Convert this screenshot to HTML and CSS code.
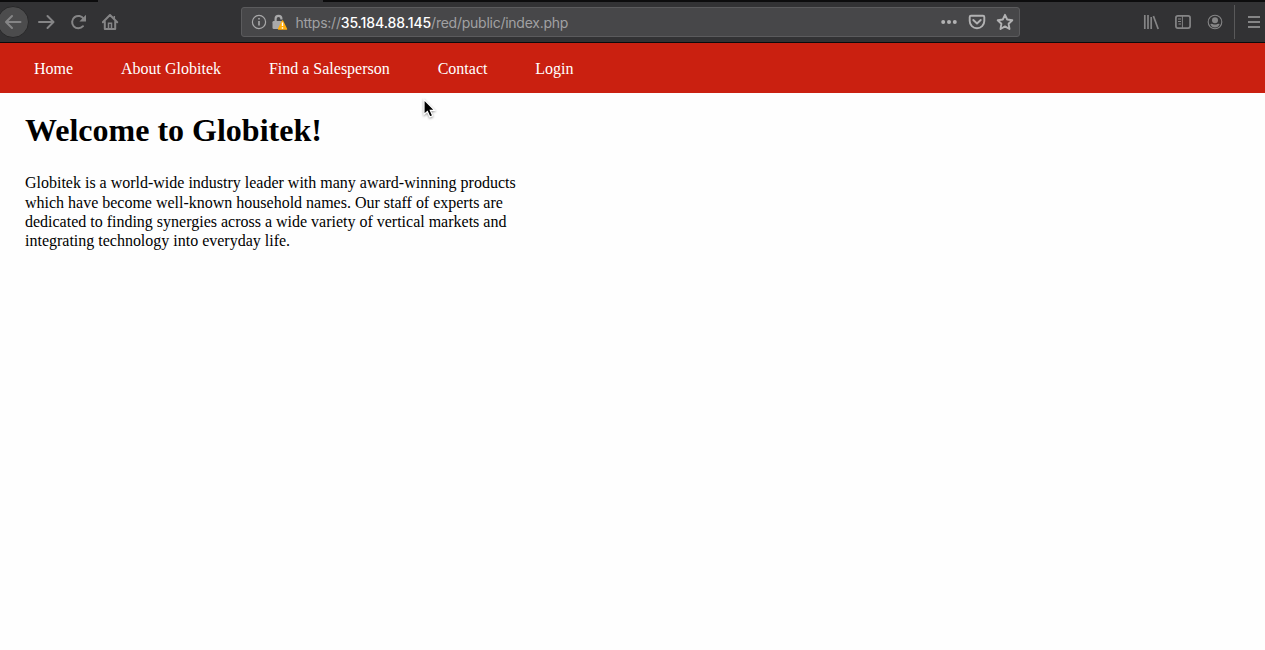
FILE: index.html
```html
<!DOCTYPE html>
<html lang="en">
<head>
<meta charset="utf-8">
<title>Globitek</title>
<link rel="stylesheet" href="styles.css">
</head>
<body>
<div class="tabs"><span class="active-tab"></span></div>
<header class="toolbar">
  <div class="navigation">
    <span class="back"><svg width="30" height="32" viewBox="0 0 30 32"><circle cx="13" cy="16" r="15.5" fill="#4c4c4d" stroke="#282829"/><path d="M20.5 16H6.5M12 10l-6 6 6 6" class="stroke"/></svg></span>
    <svg width="18" height="16" viewBox="0 0 18 16"><path d="M1 8h14M9.5 2l6 6-6 6" class="stroke"/></svg>
    <svg width="18" height="16" viewBox="0 0 18 16"><path d="M13 12.2A6.2 6.2 0 1 1 13.7 5" class="stroke"/><path d="M16 .8V7.4H9.4z" fill="#858586"/></svg>
    <svg width="18" height="16" viewBox="0 0 18 16"><path d="M.8 8.2 8 1l7.2 7.2M2.8 7.8V15h10.4V7.8" class="stroke"/><path d="M6.5 15V9.2h3V15M12.3 5V2" fill="none" stroke="#858586" stroke-width="1.5"/></svg>
  </div>
  <div class="address">
    <svg class="info" width="16" height="16" viewBox="0 0 16 16"><circle cx="8" cy="8" r="6.6" fill="none" stroke="#a9a9aa" stroke-width="1.2"/><path d="M8 7v4.5M8 4v1.6" stroke="#a9a9aa" stroke-width="1.6"/></svg>
    <svg class="lock" width="17" height="17" viewBox="0 0 17 17"><path d="M3.6 8.5V4.8a2.9 2.9 0 0 1 5.8 0V5.6" fill="none" stroke="#a9a9aa" stroke-width="2.2"/><rect x=".5" y="7" width="10" height="8" rx="1.3" fill="#a9a9aa"/><path d="M10.5 7 14.4 15H6.6z" fill="#ffad0d" stroke="#ffad0d" stroke-width="1.6" stroke-linejoin="round"/><path d="M10.5 8.5v3.6M10.5 13.3v1.4" stroke="#fff" stroke-width="1.4"/></svg>
    <span class="url">https://<span class="host">35.184.88.145</span>/red/public/index.php</span>
    <div class="actions">
      <svg width="18" height="18" viewBox="0 0 18 18" fill="#b2b2b3"><circle cx="3.2" cy="9" r="2"/><circle cx="9" cy="9" r="2"/><circle cx="14.8" cy="9" r="2"/></svg>
      <svg width="18" height="18" viewBox="0 0 18 18"><path d="M3 2.8h12q1.3 0 1.3 1.3V8A7.3 7.3 0 0 1 1.7 8V4.1q0-1.3 1.3-1.3z" class="bright"/><path d="m5.3 7 3.7 3.5L12.7 7" class="bright"/></svg>
      <svg width="18" height="18" viewBox="0 0 18 18"><path d="m9 1.8 2.2 4.7 5.1.7-3.7 3.6.9 5.2L9 13.4 4.5 16l.9-5.2-3.7-3.6 5.1-.7z" class="bright"/></svg>
    </div>
  </div>
  <div class="tools">
    <svg width="16" height="16" viewBox="0 0 16 16"><path d="M1.8 1v14M5 1v14M8.2 3v12M10.4 2 15.2 15" fill="none" stroke="#858586" stroke-width="1.7"/></svg>
    <svg width="16" height="16" viewBox="0 0 16 16"><rect x=".9" y="1.9" width="14.2" height="12.2" rx="2" fill="none" stroke="#858586" stroke-width="1.7"/><path d="M7.4 2v12" stroke="#858586"/><path d="M3 5h3M3 7.5h3M3.5 10H6" stroke="#858586" stroke-width="1.1"/></svg>
    <svg width="16" height="16" viewBox="0 0 16 16"><circle cx="8" cy="8" r="6.8" fill="none" stroke="#858586" stroke-width="1.1"/><circle cx="8" cy="6.2" r="3" fill="#858586"/><path d="M3.3 10q1.2-.6 2.4 0 2.3 1.2 4.6 0 1.2-.6 2.4 0-1.3 3.6-4.7 3.6T3.3 10z" fill="#858586"/></svg>
  </div>
  <div class="menu"><svg width="16" height="16" viewBox="0 0 16 16"><path d="M1 3h12M1 8h12M1 13h12" stroke="#858586" stroke-width="1.8"/></svg></div>
</header>
<nav class="site-nav">
  <a>Home</a><a>About Globitek</a><a>Find a Salesperson</a><a>Contact</a><a>Login</a>
</nav>
<main class="content">
  <h1 class="title">Welcome to Globitek!</h1>
  <p class="intro">Globitek is a world-wide industry leader with many award-winning products<br>which have become well-known household names. Our staff of experts are<br>dedicated to finding synergies across a wide variety of vertical markets and<br>integrating technology into everyday life.</p>
</main>
<svg class="cursor" width="16" height="22" viewBox="0 0 16 22"><path d="M2 1.5v15l3.4-3 2.5 5.4 2.8-1.2-2.4-5.3h4.4z" fill="#000" stroke="#fff" stroke-width="1.2"/></svg>
</body>
</html>
```
FILE: styles.css
```css
* { box-sizing: border-box; }
body { margin: 0; height: 650px; overflow: hidden; background: #fefefe; font-family: "Liberation Serif", serif; }
svg { display: block; flex: none; }
.tabs { height: 2px; background: #0c0c0d; display: flex; }
.active-tab { margin-left: 98px; width: 225px; height: 2px; background: #323234; }
.toolbar { height: 41px; background: #323234; border-bottom: 1px solid #0a0a0b; display: flex; align-items: center; }
.navigation { width: 241px; display: flex; align-items: center; gap: 14px; }
.back { width: 24px; display: flex; }
.stroke { fill: none; stroke: #858586; stroke-width: 2; stroke-linecap: round; stroke-linejoin: round; }
.bright { fill: none; stroke: #b2b2b3; stroke-width: 1.9; stroke-linecap: round; stroke-linejoin: round; }
.address { width: 779px; height: 30px; border: 1px solid #5b5b5d; border-radius: 3px; background: #474749; display: flex; align-items: center; padding: 0 5.5px 0 8.5px; }
.lock { margin-left: 5.5px; }
.url { margin: 2px 0 0 6.5px; font: 14px/18px Inter, sans-serif; letter-spacing: -0.25px; color: #a1a1a3; white-space: nowrap; }
.host { color: #fff; font-weight: 500; letter-spacing: -0.07px; }
.actions { margin-left: auto; display: flex; gap: 10px; }
.tools { margin-left: 123px; display: flex; gap: 16px; }
.menu { margin-left: 11px; height: 34px; border-left: 1px solid #59595a; padding: 9px 0 0 12px; }
.site-nav { height: 50px; background: #ca2010; color: #fff; display: flex; align-items: center; gap: 47.9px; padding: 2px 0 0 34px; font-size: 16px; line-height: 20px; white-space: nowrap; }
.content { padding: 18px 25px; color: #000; }
.title { margin: 0; font-size: 32px; line-height: 39px; white-space: nowrap; }
.intro { margin: 23.3px 0 0; font-size: 16px; line-height: 19.2px; letter-spacing: -0.005px; white-space: nowrap; }
.cursor { position: absolute; left: 422px; top: 98px; filter: drop-shadow(0 1px 1px #0006); }
```
